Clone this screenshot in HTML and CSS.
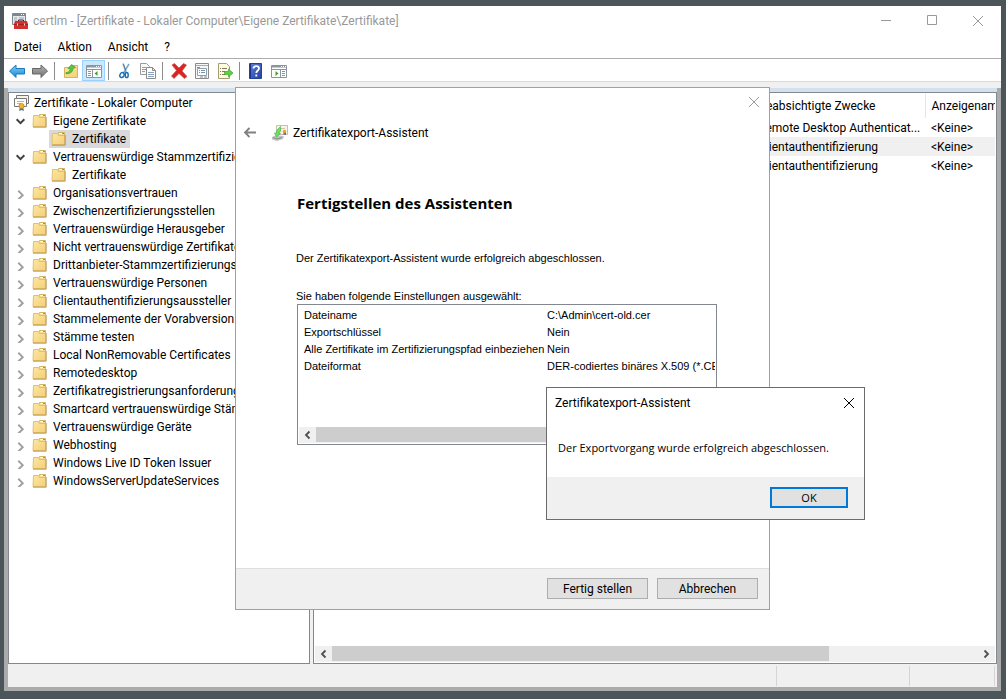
FILE: index.html
```html
<!DOCTYPE html>
<html lang="de">
<head>
<meta charset="utf-8">
<title>certlm - [Zertifikate - Lokaler Computer\Eigene Zertifikate\Zertifikate]</title>
<link rel="stylesheet" href="styles.css">
</head>
<body>
<svg class="defs" aria-hidden="true">
  <defs>
    <linearGradient id="fold" x1="0" y1="0" x2="1" y2="1"><stop offset="0" stop-color="#fde7a2"/><stop offset="1" stop-color="#f4cf78"/></linearGradient>
    <linearGradient id="blue" x1="0" y1="0" x2="0" y2="1"><stop offset="0" stop-color="#7fd0f7"/><stop offset="1" stop-color="#1686d4"/></linearGradient>
    <linearGradient id="gray" x1="0" y1="0" x2="0" y2="1"><stop offset="0" stop-color="#b4b4b4"/><stop offset="1" stop-color="#707070"/></linearGradient>
    <linearGradient id="help" x1="0" y1="0" x2="1" y2="1"><stop offset="0" stop-color="#5b80dc"/><stop offset="1" stop-color="#2340a0"/></linearGradient>
  </defs>
  <symbol id="i-folder" viewBox="0 0 16 16">
    <path d="M6.500 3.500l1-2h6v3h-7z" fill="#f3dc97" stroke="#d5b266"/>
    <path d="M8.500 2.500h3" stroke="#fff"/><path d="M11 2.500h2" stroke="#4aa8d8"/>
    <path d="M1.500 2.500h5l1 2h6v9h-12.500z" fill="url(#fold)" stroke="#e2c070"/>
    <path d="M1 14.200h13.200V4" fill="none" stroke="#a98640" stroke-width=".8"/>
  </symbol>
  <symbol id="i-right" viewBox="0 0 10 10"><path d="M3 2.500l4 4-4 4" fill="none" stroke="#a0a0a0" stroke-width="1.800"/></symbol>
  <symbol id="i-down" viewBox="0 0 10 10"><path d="M1.500 3l3.500 3.500L8.500 3" fill="none" stroke="#404040" stroke-width="1.800"/></symbol>
  <symbol id="i-sleft" viewBox="0 0 10 10"><path d="M6.500 1.500L3 5l3.500 3.500" fill="none" stroke="#505050" stroke-width="1.800"/></symbol>
  <symbol id="i-sright" viewBox="0 0 10 10"><path d="M2.500 1.500L6 5 2.500 8.500" fill="none" stroke="#505050" stroke-width="1.800"/></symbol>
  <symbol id="i-close" viewBox="0 0 12 12"><path d="M1 1l10 10M11 1L1 11" fill="none" stroke="currentColor"/></symbol>
</svg>

<main class="window">
  <header class="titlebar">
    <svg class="app-icon" viewBox="0 0 16 16">
      <path d="M.5.500h13v11H.5z" fill="#e4e9ee" stroke="#7d8792"/><path d="M1 2h12" stroke="#7d8792" stroke-width="2"/><path d="M9 1.500h1M11 1.500h1" stroke="#fff"/>
      <path d="M2 5h3M2 7h3M7 5h5" stroke="#9aa7b3"/>
      <path d="M6.500 8.500V7h5v1.500" fill="none" stroke="#4c1515"/>
      <path d="M3 8h12l1 3v5H2v-5z" fill="#d0312d"/><path d="M2 11.500h14" stroke="#a81f1f"/><path d="M5.500 10.500v2M12.500 10.500v2" stroke="#f5dede"/>
    </svg>
    <span class="title-text">certlm - [Zertifikate - Lokaler Computer\Eigene Zertifikate\Zertifikate]</span>
    <div class="win-controls">
      <button type="button" aria-label="Minimieren"><svg viewBox="0 0 12 12"><path d="M1 5.500h10" stroke="currentColor"/></svg></button>
      <button type="button" aria-label="Maximieren"><svg viewBox="0 0 12 12"><path d="M1.500.500h9v9h-9z" fill="none" stroke="currentColor"/></svg></button>
      <button type="button" aria-label="Schließen"><svg><use href="#i-close"/></svg></button>
    </div>
  </header>
  <nav class="menubar">
    <button type="button">Datei</button><button type="button">Aktion</button><button type="button">Ansicht</button><button type="button">?</button>
  </nav>
  <div class="toolbar">
    <button type="button" aria-label="Zurück"><svg viewBox="0 0 16 16"><path d="M.5 8L7 2v3.500h8.500v5.500H7v3.500z" fill="url(#blue)" stroke="#1c78b8"/></svg></button>
    <button type="button" aria-label="Vorwärts"><svg viewBox="0 0 16 16"><path d="M15.500 8L9 2v3.500H.5v5.500H9v3.500z" fill="url(#gray)" stroke="#666"/></svg></button>
    <i class="sep"></i>
    <button type="button" aria-label="Eine Ebene nach oben"><svg viewBox="0 0 16 16"><path d="M1.500 4.500h6l2-2h5v12h-13z" fill="url(#fold)" stroke="#d9b25e"/><path d="M3 9.500c3.500 0 4-2 4-4H5L8.500 1.500l4 3-2.500.8c0 4-3 5.500-7 5.500z" fill="#55c83d" stroke="#2c9324" stroke-width=".6"/></svg></button>
    <button type="button" class="pressed" aria-label="Konsolenstruktur anzeigen"><svg viewBox="0 0 16 16"><path d="M.5 2.500h15v12H.5z" fill="#fff" stroke="#8b95a1"/><path d="M1 3.500h14" stroke="#8b95a1" stroke-width="2"/><path d="M10 3.500h1M12 3.500h1M14 3.500h1" stroke="#fff"/><path d="M1 6.500h14M6.500 6v8" stroke="#8b95a1"/><path d="M2 8.500h3M2 10.500h3M2 12.500h3" stroke="#8b95a1"/><path d="M11.500 8v5L8.500 10.500z" fill="#39a52b"/></svg></button>
    <i class="sep"></i>
    <button type="button" aria-label="Ausschneiden"><svg viewBox="0 0 16 16"><path d="M6 .5l3 9M12 1L6.500 10" stroke="#7fa6c4" stroke-width="1.500"/><path d="M6.500 1l2.500 7" stroke="#326f9f" stroke-width=".7"/><ellipse cx="5" cy="12" rx="2" ry="2.600" transform="rotate(30 5 12)" fill="none" stroke="#1b71b8" stroke-width="1.500"/><ellipse cx="9.700" cy="12" rx="1.500" ry="2.600" fill="none" stroke="#1b71b8" stroke-width="1.500"/></svg></button>
    <button type="button" aria-label="Kopieren"><svg viewBox="0 0 16 16"><path d="M.5.500h6l3 3v8h-9z" fill="#fafafa" stroke="#9a9a9a"/><path d="M2 4.500h4M2 6.500h4M2 8.500h3" stroke="#89a2bb"/><path d="M6.500 4.500h6l3 3v8h-9z" fill="#fff" stroke="#8a8a8a"/><path d="M12.500 4.500v3h3" fill="none" stroke="#8a8a8a"/><path d="M8 9.500h6M8 11.500h6M8 13.500h6" stroke="#89a2bb"/></svg></button>
    <i class="sep"></i>
    <button type="button" aria-label="Löschen"><svg viewBox="0 0 16 16"><path d="M1 2l2.500-1.500L8 5l4.500-4.500L15.500 2l-4.500 6 5 5.500-2.500 2-5.500-5-5 5L.5 13l5-5.500z" fill="#d92424" stroke="#d04a4a" stroke-width=".7"/></svg></button>
    <button type="button" aria-label="Eigenschaften"><svg viewBox="0 0 16 16"><path d="M1.500.500h13v15h-13z" fill="#f7f7f7" stroke="#8b8b8b"/><path d="M2 2.500h12" stroke="#aaa"/><path d="M3.500 5.500h9v7h-9z" fill="#fff" stroke="#90a0b0"/><path d="M5 7.500h1M7 7.500h4M5 9.500h1M7 9.500h4M3 4.500h3M6 14h3M10 14h3" stroke="#7d91a5"/></svg></button>
    <button type="button" aria-label="Liste exportieren"><svg viewBox="0 0 16 16"><path d="M1.500.500h8l3 3v12h-11z" fill="#fffbe0" stroke="#a59c70"/><path d="M3 5.500h1M5 5.500h5M3 8.500h1M5 8.500h3M3 11.500h1M5 11.500h3" stroke="#817b65"/><path d="M7.500 8.500h4V6l4.500 4-4.500 4v-2.500h-4z" fill="#61cf45" stroke="#35962a" stroke-width=".6"/></svg></button>
    <i class="sep"></i>
    <button type="button" aria-label="Hilfe"><svg viewBox="0 0 16 16"><path d="M1.500.500h12v15h-12z" fill="url(#help)" stroke="#24409a"/><path d="M2.500 1v14" stroke="#1c3180"/><path d="M5.500 5.500C5.500 2.300 11 2.500 11 5.500c0 2-2.700 2-2.700 4.500" fill="none" stroke="#fff" stroke-width="1.800"/><path d="M7.400 11.500h1.800v2H7.400z" fill="#fff"/></svg></button>
    <button type="button" aria-label="Aktionsbereich anzeigen"><svg viewBox="0 0 16 16"><path d="M.5 2.500h15v12H.5z" fill="#fff" stroke="#8b95a1"/><path d="M1 3.500h14" stroke="#8b95a1" stroke-width="2"/><path d="M10 3.500h1M12 3.500h1M14 3.500h1" stroke="#fff"/><path d="M1 6.500h14M9.500 6v8" stroke="#8b95a1"/><path d="M11 8.500h3M11 10.500h3M11 12.500h3" stroke="#8b95a1"/><path d="M4.500 8v5L7.500 10.500z" fill="#39a52b"/></svg></button>
  </div>
  <div class="band"></div>

  <div class="client">
    <div class="panes">
      <section class="tree">
        <ul>
          <li class="root"><svg class="ico" viewBox="0 0 16 16"><path d="M3.500.500h12v8h-12z" fill="#f7f3e6" stroke="#777"/><path d="M1.500 3.500h12v8h-12z" fill="#fffdf5" stroke="#777"/><path d="M4 6.500h7M4 8.500h4" stroke="#c0b89c"/><path d="M7 12l-1 4 2.500-1L11 16l-1-4z" fill="#2d79c7"/><circle cx="8.500" cy="11" r="2.600" fill="#f4b52b" stroke="#bd7d13" stroke-width=".7"/></svg><span>Zertifikate - Lokaler Computer</span></li>
          <li><svg class="chev"><use href="#i-down"/></svg><svg class="ico"><use href="#i-folder"/></svg><span>Eigene Zertifikate</span></li>
          <li class="child"><span class="sel"><svg class="ico"><use href="#i-folder"/></svg><span>Zertifikate</span></span></li>
          <li><svg class="chev"><use href="#i-down"/></svg><svg class="ico"><use href="#i-folder"/></svg><span>Vertrauenswürdige Stammzertifizierungsstellen</span></li>
          <li class="child"><span class="node"><svg class="ico"><use href="#i-folder"/></svg><span>Zertifikate</span></span></li>
          <li><svg class="chev"><use href="#i-right"/></svg><svg class="ico"><use href="#i-folder"/></svg><span>Organisationsvertrauen</span></li>
          <li><svg class="chev"><use href="#i-right"/></svg><svg class="ico"><use href="#i-folder"/></svg><span>Zwischenzertifizierungsstellen</span></li>
          <li><svg class="chev"><use href="#i-right"/></svg><svg class="ico"><use href="#i-folder"/></svg><span>Vertrauenswürdige Herausgeber</span></li>
          <li><svg class="chev"><use href="#i-right"/></svg><svg class="ico"><use href="#i-folder"/></svg><span>Nicht vertrauenswürdige Zertifikate</span></li>
          <li><svg class="chev"><use href="#i-right"/></svg><svg class="ico"><use href="#i-folder"/></svg><span>Drittanbieter-Stammzertifizierungsstellen</span></li>
          <li><svg class="chev"><use href="#i-right"/></svg><svg class="ico"><use href="#i-folder"/></svg><span>Vertrauenswürdige Personen</span></li>
          <li><svg class="chev"><use href="#i-right"/></svg><svg class="ico"><use href="#i-folder"/></svg><span>Clientauthentifizierungsaussteller</span></li>
          <li><svg class="chev"><use href="#i-right"/></svg><svg class="ico"><use href="#i-folder"/></svg><span>Stammelemente der Vorabversion</span></li>
          <li><svg class="chev"><use href="#i-right"/></svg><svg class="ico"><use href="#i-folder"/></svg><span>Stämme testen</span></li>
          <li><svg class="chev"><use href="#i-right"/></svg><svg class="ico"><use href="#i-folder"/></svg><span>Local NonRemovable Certificates</span></li>
          <li><svg class="chev"><use href="#i-right"/></svg><svg class="ico"><use href="#i-folder"/></svg><span>Remotedesktop</span></li>
          <li><svg class="chev"><use href="#i-right"/></svg><svg class="ico"><use href="#i-folder"/></svg><span>Zertifikatregistrierungsanforderungen</span></li>
          <li><svg class="chev"><use href="#i-right"/></svg><svg class="ico"><use href="#i-folder"/></svg><span>Smartcard vertrauenswürdige Stämme</span></li>
          <li><svg class="chev"><use href="#i-right"/></svg><svg class="ico"><use href="#i-folder"/></svg><span>Vertrauenswürdige Geräte</span></li>
          <li><svg class="chev"><use href="#i-right"/></svg><svg class="ico"><use href="#i-folder"/></svg><span>Webhosting</span></li>
          <li><svg class="chev"><use href="#i-right"/></svg><svg class="ico"><use href="#i-folder"/></svg><span>Windows Live ID Token Issuer</span></li>
          <li><svg class="chev"><use href="#i-right"/></svg><svg class="ico"><use href="#i-folder"/></svg><span>WindowsServerUpdateServices</span></li>
        </ul>
      </section>
      <section class="list">
        <table class="certs">
          <colgroup><col><col class="c-use"><col class="c-name"></colgroup>
          <thead><tr><th></th><th>Beabsichtigte Zwecke</th><th>Anzeigename</th></tr></thead>
          <tbody>
            <tr><td></td><td>Remote Desktop Authenticat...</td><td>&lt;Keine&gt;</td></tr>
            <tr class="hot"><td></td><td>Clientauthentifizierung</td><td>&lt;Keine&gt;</td></tr>
            <tr><td></td><td>Clientauthentifizierung</td><td>&lt;Keine&gt;</td></tr>
          </tbody>
        </table>
        <div class="scroll"><svg><use href="#i-sleft"/></svg><div class="track"><div class="thumb"></div></div><svg><use href="#i-sright"/></svg></div>
      </section>
    </div>
    <footer class="status"><div></div><div class="s-mid"></div><div class="s-end"></div></footer>
  </div>
</main>

<section class="wizard" role="dialog" aria-labelledby="wiz-title">
  <button type="button" class="wiz-close" aria-label="Schließen"><svg><use href="#i-close"/></svg></button>
  <header class="wiz-head">
    <button type="button" class="back" aria-label="Zurück"><svg viewBox="0 0 14 14"><path d="M13 6.500H2M6.500 2L2 6.500 6.500 11" fill="none" stroke="#808080" stroke-width="1.800"/></svg></button>
    <svg class="ico" viewBox="0 0 16 16"><path d="M4.500.500h11v9h-11z" fill="#f6f3e8" stroke="#c5bfae"/><path d="M7 3.500h6" stroke="#c9c3b0"/><path d="M0 12l4-2 8 1-1 3-6 2-5-1.500z" fill="#c4c4c4"/><path d="M1 12.500l4 1.500 5-1.500" fill="none" stroke="#888"/><path d="M8.500 1.500L5 5 4.500 8H2.500l2 4L8.500 8.500H7L8.500 6z" fill="#6fe060" stroke="#3fb43a" stroke-width=".6"/><path d="M11.500 7v3l1-.6 1.500.6V7z" fill="#3c6bd0"/><circle cx="12.500" cy="6.500" r="1.700" fill="#ee9f24"/></svg>
    <span id="wiz-title">Zertifikatexport-Assistent</span>
  </header>
  <div class="wiz-body">
    <h1>Fertigstellen des Assistenten</h1>
    <p class="done">Der Zertifikatexport-Assistent wurde erfolgreich abgeschlossen.</p>
    <p id="set-label">Sie haben folgende Einstellungen ausgewählt:</p>
    <div class="settings">
      <table aria-labelledby="set-label">
        <tbody>
          <tr><td>Dateiname</td><td>C:\Admin\cert-old.cer</td></tr>
          <tr><td>Exportschlüssel</td><td>Nein</td></tr>
          <tr><td>Alle Zertifikate im Zertifizierungspfad einbeziehen</td><td>Nein</td></tr>
          <tr><td>Dateiformat</td><td>DER-codiertes binäres X.509 (*.CER)</td></tr>
        </tbody>
      </table>
      <div class="scroll"><svg><use href="#i-sleft"/></svg><div class="track"><div class="thumb"></div></div><svg><use href="#i-sright"/></svg></div>
    </div>
  </div>
  <footer class="wiz-foot"><button type="button">Fertig stellen</button><button type="button">Abbrechen</button></footer>
</section>

<section class="message" role="alertdialog" aria-labelledby="msg-title">
  <header><span id="msg-title">Zertifikatexport-Assistent</span><button type="button" aria-label="Schließen"><svg><use href="#i-close"/></svg></button></header>
  <p>Der Exportvorgang wurde erfolgreich abgeschlossen.</p>
  <footer><button type="button">OK</button></footer>
</section>
</body>
</html>
```
FILE: styles.css
```css
* { box-sizing: border-box; }
body {
  margin: 0;
  min-height: 100vh;
  display: flex;
  padding: 6px 5px 8px 4px;
  overflow: hidden;
  background: #4c555a;
  color: #000;
  font: 12px/18px Roboto, "Open Sans", sans-serif;
}
button { font: inherit; color: inherit; padding: 0; border: 0; background: none; }
svg { display: block; flex: none; }
p, h1, ul { margin: 0; padding: 0; }
.defs { position: absolute; width: 0; height: 0; }
.ico { width: 16px; height: 16px; }

.window { flex: 1; min-width: 0; display: flex; flex-direction: column; background: #fff; }
.titlebar { display: flex; align-items: center; height: 29px; padding-left: 8px; color: #999; }
.app-icon { width: 16px; height: 16px; margin-right: 5px; }
.title-text { flex: 1; white-space: nowrap; }
.win-controls { display: flex; }
.win-controls button { width: 46px; height: 28px; display: grid; place-items: center; }
.win-controls svg { width: 12px; height: 12px; }

.menubar { display: flex; align-items: center; gap: 16px; height: 24px; padding: 0 10px; border-bottom: 1px solid #adadad; }
.toolbar { display: flex; align-items: center; height: 23px; border-bottom: 1px solid #d9d9d9; padding: 1px 0 0 1px; }
.toolbar button { width: 23px; height: 21px; display: grid; place-items: center; }
.toolbar svg { width: 16px; height: 16px; }
.toolbar .sep { width: 1px; height: 18px; margin: 0 4px 0 3px; background: #8d8d8d; }
.toolbar .pressed { background: #cce8ff; border: 1px solid #99d1ff; }
.band { height: 6px; background: #f0f0f0; }

.client { flex: 1; display: flex; flex-direction: column; border: solid #ababab; border-width: 0 4px 4px; background: #f0f0f0; }
.panes { flex: 1; display: grid; grid-template-columns: 302px 1fr; gap: 3px; border-top: 4px solid #d3e1ef; margin-bottom: 1px; }
.tree, .list { border: 1px solid #828790; background: #fff; overflow: hidden; min-width: 0; }
.tree { padding-top: 1px; }
.tree ul { list-style: none; }
.tree li { display: flex; align-items: center; height: 18px; padding-left: 6px; white-space: nowrap; }
.tree li > .ico { margin-right: 5px; }
.tree .root { padding-left: 4px; }
.chev { width: 11px; height: 11px; margin-right: 6px; }
.tree .child { padding-left: 40px; }
.sel, .node { display: flex; align-items: center; gap: 5px; height: 18px; padding: 0 4px 0 2px; }
.sel { background: #d9d9d9; }

.list { display: flex; flex-direction: column; justify-content: space-between; padding: 1px; }
.certs { width: 100%; table-layout: fixed; border-collapse: collapse; }
.c-use { width: 173px; }
.c-name { width: 70px; }
.certs th, .certs td { height: 19px; padding: 0 0 0 6px; text-align: left; font-weight: 400; white-space: nowrap; overflow: hidden; }
.certs th { height: 24px; border-right: 1px solid #e5e5e5; }
.certs th:last-child { border-right: 0; }
.hot { background: #f0f0f0; }

.scroll { display: flex; align-items: center; height: 16px; background: #f0f0f0; }
.scroll svg { width: 10px; height: 10px; margin: 0 3px 0 4px; }
.track { flex: 1; height: 15px; align-self: flex-start; }
.thumb { height: 100%; background: #cdcdcd; }
.list .thumb { width: 77%; }

.status { display: flex; height: 22px; padding: 1px 2px 1px 0; }
.status div { flex: 1; border-right: 1px solid #d5d5d5; }
.status .s-mid { flex: 0 0 133px; }
.status .s-end { flex: 0 0 85px; }

.wizard {
  position: absolute; left: 235px; top: 87px; width: 535px; height: 523px;
  display: flex; flex-direction: column;
  border: 1px solid #a0a0a0; background: #fff;
}
.wiz-close { align-self: flex-end; padding: 8px 9px; color: #999; }
.wiz-close svg { width: 12px; height: 12px; }
.wiz-head { display: flex; align-items: center; height: 34px; padding-left: 7px; }
.back svg { width: 14px; height: 14px; }
.wiz-head .ico { margin: 0 5px 0 15px; }
.wiz-body { flex: 1; padding: 42px 52px 0 60px; }
.wiz-body h1 { font: 700 15px/22px "Open Sans", sans-serif; padding-left: 1px; }
.wiz-body p { font: 11px/16px "Liberation Sans", Arial, sans-serif; }
.wiz-body .done { margin: 36px 0 22px; }
.settings { height: 141px; margin: 0 0 0 1px; padding: 1px; border: 1px solid #828790; display: flex; flex-direction: column; justify-content: space-between; overflow: hidden; }
.settings table { border-collapse: collapse; width: 100%; table-layout: fixed; margin-top: 1px; font: 11px/17px "Liberation Sans", Arial, sans-serif; }
.settings td { padding: 0 0 0 5px; white-space: nowrap; overflow: hidden; }
.settings td:first-child { width: 243px; overflow: visible; }
.wiz-foot { display: flex; justify-content: flex-end; gap: 9px; height: 41px; padding: 9px 11px; border-top: 1px solid #dfdfdf; background: #f0f0f0; }
.wiz-foot button { width: 101px; height: 21px; padding-top: 1px; border: 1px solid #adadad; background: #e1e1e1; line-height: 18px; }

.message {
  position: absolute; left: 546px; top: 387px; width: 319px; height: 133px;
  display: flex; flex-direction: column;
  border: 1px solid #6b6b6b; background: #fff;
}
.message header { display: flex; align-items: center; justify-content: space-between; height: 29px; padding: 0 9px 0 8px; }
.message svg { width: 12px; height: 12px; }
.message p { flex: 1; padding: 22px 11px 0; font: 11px/18px "Open Sans", sans-serif; }
.message footer { height: 42px; padding: 10px 16px; display: flex; justify-content: flex-end; background: #f0f0f0; }
.message footer button { width: 78px; height: 21px; border: 2px solid #0078d7; background: #e1e1e1; font: 11px/17px "Open Sans", sans-serif; }
```
